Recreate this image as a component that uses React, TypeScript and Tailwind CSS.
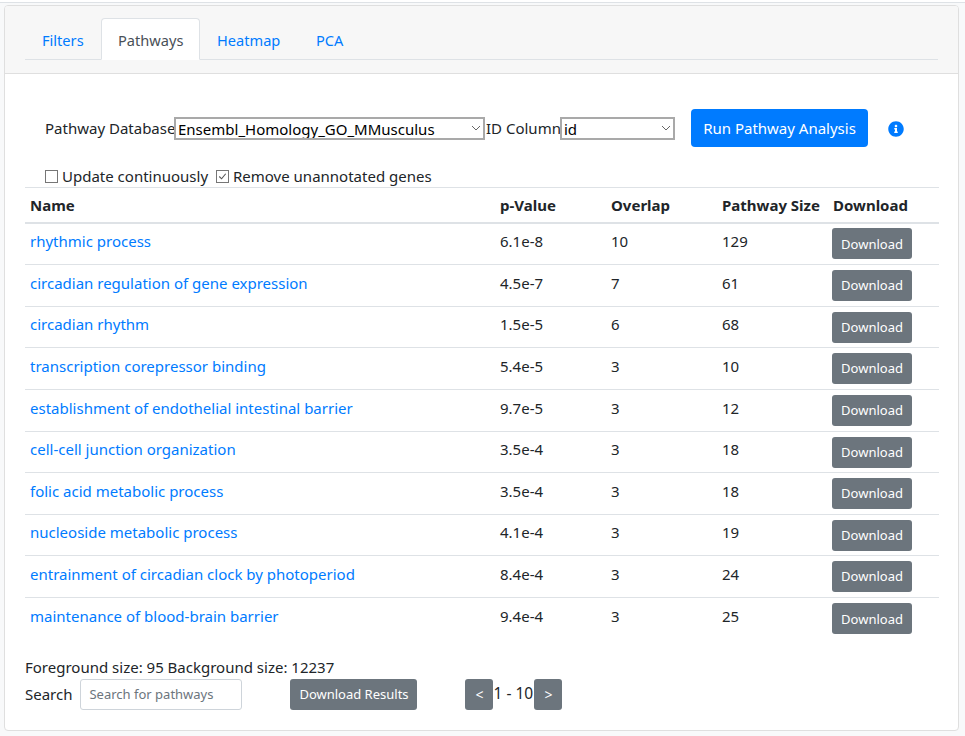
import React from 'react';

const rows = [
  { name: 'rhythmic process', p: '6.1e-8', overlap: '10', size: '129', height: 'h-[42px]' },
  { name: 'circadian regulation of gene expression', p: '4.5e-7', overlap: '7', size: '61', height: 'h-[42px]' },
  { name: 'circadian rhythm', p: '1.5e-5', overlap: '6', size: '68', height: 'h-[41px]' },
  { name: 'transcription corepressor binding', p: '5.4e-5', overlap: '3', size: '10', height: 'h-[42px]' },
  { name: 'establishment of endothelial intestinal barrier', p: '9.7e-5', overlap: '3', size: '12', height: 'h-[42px]' },
  { name: 'cell-cell junction organization', p: '3.5e-4', overlap: '3', size: '18', height: 'h-[41px]' },
  { name: 'folic acid metabolic process', p: '3.5e-4', overlap: '3', size: '18', height: 'h-[42px]' },
  { name: 'nucleoside metabolic process', p: '4.1e-4', overlap: '3', size: '19', height: 'h-[41px]' },
  { name: 'entrainment of circadian clock by photoperiod', p: '8.4e-4', overlap: '3', size: '24', height: 'h-[42px]' },
  { name: 'maintenance of blood-brain barrier', p: '9.4e-4', overlap: '3', size: '25', height: 'h-[42px]' },
];

const tabs = [
  { name: 'Filters', width: 'w-[76px]' },
  { name: 'Pathways', width: 'w-[99px]' },
  { name: 'Heatmap', width: 'w-[99px]' },
  { name: 'PCA', width: 'w-[70px]' },
];

function Chevron() {
  return (
    <svg className="pointer-events-none absolute right-[4px] top-[7px] h-[8px] w-[10px]" viewBox="0 0 10 8" fill="none" stroke="#666" strokeWidth="1">
      <path d="M1 2l4 4 4-4" />
    </svg>
  );
}

export default function App() {
  return (
    <div className="h-[736px] overflow-hidden bg-[#f8f9fa] font-['Noto_Sans',sans-serif] text-[15px] text-[#212529]">
      <div className="h-[3px] border-b border-[#dee2e6] bg-white" />
      <div className="mx-1 mt-[2px] h-[726px] w-[955px] overflow-hidden rounded border border-[#dfdfdf] bg-white">
        <div className="h-[68px] border-b border-[#dfdfdf] bg-[#f7f7f7] px-5 pt-3">
          <div className="flex h-[42px] border-b border-[#dee2e6]">
            {tabs.map((t) => (
              <a
                key={t.name}
                className={
                  t.name === 'Pathways'
                    ? `h-[42px] ${t.width} rounded-t border border-[#dee2e6] border-b-white bg-white pl-4 pt-[11px] text-[14.6px] text-[#495057]`
                    : `h-[42px] ${t.width} border border-transparent pl-4 pt-[11px] text-[14.6px] text-[#007bff]`
                }
              >
                {t.name}
              </a>
            ))}
          </div>
        </div>

        <div className="px-5">
          <div className="mt-[35px] flex h-[38px] items-center pl-5">
            <span className="w-[129px] whitespace-nowrap">Pathway Database</span>
            <div className="relative h-[23px] w-[311px]">
              <select className="h-[23px] w-full appearance-none border-2 border-[#a9a9a9] bg-white pb-0 pl-[2px] pt-px text-[15px] leading-[19px] text-black">
                <option>Ensembl_Homology_GO_MMusculus</option>
              </select>
              <Chevron />
            </div>
            <span className="w-[75px] whitespace-nowrap pl-px">ID Column</span>
            <div className="relative h-[23px] w-[115px]">
              <select className="h-[23px] w-full appearance-none border-2 border-[#a9a9a9] bg-white pb-0 pl-[2px] pt-px text-[15px] leading-[19px] text-black">
                <option>id</option>
              </select>
              <Chevron />
            </div>
            <button className="ml-4 h-[38px] w-[177px] rounded bg-[#007bff] pt-px text-white">Run Pathway Analysis</button>
            <svg className="ml-5 mt-[2px] h-4 w-4 text-[#007bff]" viewBox="0 0 512 512" fill="currentColor">
              <path d="M256 8C119 8 8 119 8 256s111 248 248 248 248-111 248-248S393 8 256 8zm0 110c23 0 42 19 42 42s-19 42-42 42-42-19-42-42 19-42 42-42zm56 254c0 7-5 12-12 12h-88c-7 0-12-5-12-12v-24c0-7 5-12 12-12h12v-64h-12c-7 0-12-5-12-12v-24c0-7 5-12 12-12h64c7 0 12 5 12 12v100h12c7 0 12 5 12 12v24z" />
            </svg>
          </div>

          <div className="mt-[18px] flex h-[22px] items-center pl-5">
            <span className="h-[13px] w-[13px] border border-[#767676] bg-white" />
            <span className="ml-1">Update continuously</span>
            <span className="ml-2 flex h-[13px] w-[13px] items-center justify-center border border-[#767676] bg-white">
              <svg viewBox="0 0 12 12" className="h-[11px] w-[11px]" fill="none" stroke="#555" strokeWidth="1.2">
                <path d="M2.5 6l2.5 2.5 4.5-5.5" />
              </svg>
            </span>
            <span className="ml-1">Remove unannotated genes</span>
          </div>

          <table className="w-[914px] table-fixed border-collapse">
            <colgroup>
              <col className="w-[470px]" />
              <col className="w-[111px]" />
              <col className="w-[111px]" />
              <col className="w-[111px]" />
              <col />
            </colgroup>
            <thead>
              <tr className="h-[35px] border-t border-b-2 border-[#dee2e6] text-left">
                {['Name', 'p-Value', 'Overlap', 'Pathway Size', 'Download'].map((h) => (
                  <th key={h} className="whitespace-nowrap px-[5px] font-bold">{h}</th>
                ))}
              </tr>
            </thead>
            <tbody>
              {rows.map((r) => (
                <tr key={r.name} className={`${r.height} border-b border-[#dee2e6] last:border-b-0`}>
                  <td className="px-[5px] pb-[5px]"><a className="text-[#007bff]">{r.name}</a></td>
                  <td className="px-[5px] pb-[5px]">{r.p}</td>
                  <td className="px-[5px] pb-[5px]">{r.overlap}</td>
                  <td className="px-[5px] pb-[5px]">{r.size}</td>
                  <td className="px-[5px]">
                    <button className="-ml-px h-[31px] w-[80px] rounded-[3px] bg-[#6c757d] pt-px text-[13px] text-white">Download</button>
                  </td>
                </tr>
              ))}
            </tbody>
          </table>

          <div className="mt-[16px] leading-[23px]">Foreground size: 95 Background size: 12237</div>
          <div className="flex h-[31px] items-center">
            <span>Search</span>
            <input
              placeholder="Search for pathways"
              className="ml-2 h-[31px] w-[162px] rounded-[3px] border border-[#ced4da] px-2 text-[13px] placeholder:text-[#6c757d]"
            />
            <button className="ml-12 h-[31px] w-[127px] rounded-[3px] bg-[#6c757d] pt-px text-[13px] text-white">Download Results</button>
            <button className="ml-12 h-[31px] w-[28px] rounded-[3px] bg-[#6c757d] pt-px text-[14px] text-white">&lt;</button>
            <span className="w-[41px] whitespace-nowrap text-[15.5px]">1 - 10</span>
            <button className="h-[31px] w-[28px] rounded-[3px] bg-[#6c757d] pt-px text-[14px] text-white">&gt;</button>
          </div>
        </div>
      </div>
    </div>
  );
}
